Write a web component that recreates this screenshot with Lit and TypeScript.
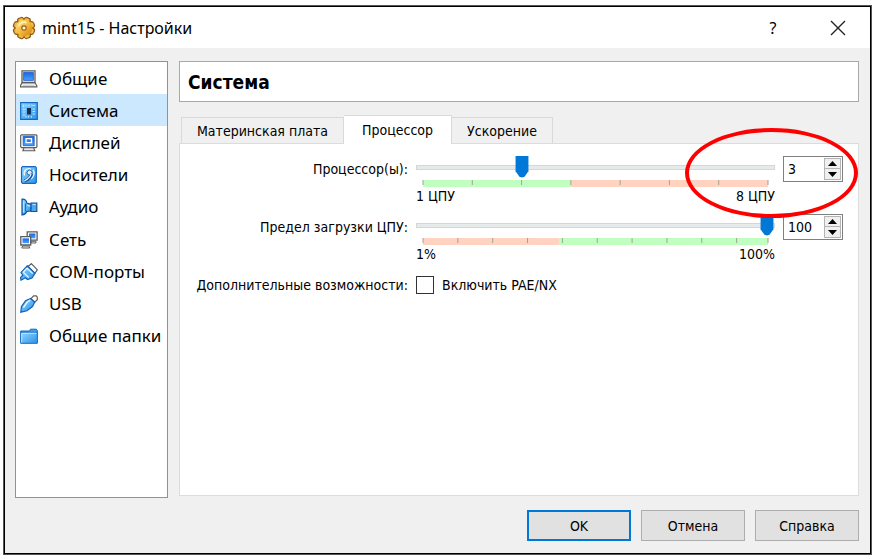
import { LitElement, html, css, svg } from "lit";
import { customElement, state, property } from "lit/decorators.js";

const icons: Record<string, unknown> = {
  general: svg`
    <path d="M2 .8h13v11.700H2z" fill="#fff" stroke="#5c5c5c" stroke-width="1.300"/>
    <path d="M3.600 2.400h9.800v8H3.600z" fill="url(#screen)" stroke="#1757c4" stroke-width=".8"/>
    <path d="M2 13h13l1.800 2.600v1.300H.400v-1.300z" fill="#fff" stroke="#5c5c5c" stroke-width="1.200"/>
    <path d="M2.500 15.200h12" stroke="#b5b5b5" stroke-width=".9"/>`,
  system: svg`
    <path d="M.7.7h16.600v16.600H.7z" fill="url(#blue)" stroke="#1468c4" stroke-width="1.200"/>
    <path d="M7 6h4v6.500H7z" fill="#12305c"/>
    <path d="M3.500 3v2M6 3v1.500M9 2.500v2M12 2.500v2M15 3.500h-2M3 7.500h2.400M3 10h2.400M3 13h2.400M12.600 7h2.400M12.600 9.500h2.400M12.600 12h2.400M6 14v1.600M8.500 14v1.600M11.500 14v1.600" stroke="#bfe4ff" stroke-width="1"/>`,
  display: svg`
    <path d="M1.500.8h14.600l.8.8v11.200l-.8.800H1.500l-.8-.8V1.600z" fill="#fff" stroke="#5c5c5c" stroke-width="1.200"/>
    <path d="M3.200 2.300h11v9.400h-11z" fill="url(#screen)" stroke="#1757c4" stroke-width=".8"/>
    <path d="M6 4.700h5.500v4H6z" fill="#2d80ee" stroke="#fff" stroke-width="1.300"/>
    <path d="M4 13.800h9.600l1.200 3H2.800z" fill="#e8e8e8" stroke="#5c5c5c" stroke-width="1.100"/>`,
  storage: svg`
    <path d="M2.500.7h12.800l1 1v14.600l-1 1H2.500l-1-1V1.700z" fill="url(#blue)" stroke="#1468c4" stroke-width="1.200"/>
    <path d="M13 3.600c2.200 3 1.200 7.400-2.600 9.400M4.600 9.500C2.800 5 7 1.400 11 3.200" fill="none" stroke="#eefaff" stroke-width="1.400"/>
    <circle cx="9.600" cy="6.600" r="2.500" fill="#d8f0ff" stroke="#1c5da6" stroke-width=".9"/>
    <path d="M11.500 8c-.5 3-3 5.500-7 7" fill="none" stroke="#174f94" stroke-width="3"/>
    <path d="M11 8c-.5 3-3 5-6.500 6.800" fill="none" stroke="#e9f7ff" stroke-width="1.300"/>`,
  audio: svg`
    <path d="M2 1.200C4.500.500 6.500 2.500 6.800 5l4.200 1.200V13l-4.200.5C6 15.500 4.500 16.800 2 17z" fill="url(#blue)" stroke="#12559f" stroke-width="1.200"/>
    <path d="M11 5h5.800v8.500H11z" fill="#4aa9f2" stroke="#12559f" stroke-width="1.200"/>
    <path d="M3.700 3.500v11M7.300 7.300l3 .8M12.600 6.500h3" stroke="#bfe8ff" stroke-width="1.200"/>
    <path d="M5.400 5.500v8" stroke="#1668be" stroke-width="1"/>`,
  network: svg`
    <path d="M7.200.8h9.900v8.400H7.200z" fill="#fff" stroke="#5c5c5c" stroke-width="1.300"/>
    <path d="M9 2.500h6.400v4.800H9z" fill="url(#screen)"/>
    <path d="M11 10.300h5v1.700h-5z" fill="#ddd" stroke="#5c5c5c" stroke-width=".9"/>
    <path d="M.8 5.700h9.900v8.300H.8z" fill="#fff" stroke="#5c5c5c" stroke-width="1.300"/>
    <path d="M2.500 7.400h6.500v4.800H2.500z" fill="url(#screen)"/>
    <path d="M2.600 15h6.400l.8 2H1.800z" fill="#eee" stroke="#5c5c5c" stroke-width="1"/>`,
  serial: svg`
    <path d="m8 3.500 3.400-2.800 6 6.200-2.600 3.500z" fill="#fff" stroke="#5c5c5c" stroke-width="1.200"/>
    <path d="M7.200 2.800 15 10.300 12 15l-4.500 1.500-2.200-1.800L1 17.200l-.5-2.700 2.300-2.200L1 9.500z" fill="url(#blue)" stroke="#1461b4" stroke-width="1.200"/>
    <path d="m7 5.300 5.700 5.300M3.500 9.500l5.200 5M3 9.500l4-4.200" fill="none" stroke="#e0f5ff" stroke-width="1.300"/>`,
  usb: svg`
    <path d="m10.700 3.800 3-3h2.500l1.100 1.300v2.700L14.500 7.400z" fill="#fff" stroke="#5c5c5c" stroke-width="1.200"/>
    <path d="M10.700 3.500 14.700 7.200 12.500 11.500 7 15.800.8 17.200 1.400 11.800 5.500 5.700z" fill="url(#blue)" stroke="#1461b4" stroke-width="1.200"/>
    <path d="m3.400 12.500 3.800-5.300 3-2" fill="none" stroke="#e6f7ff" stroke-width="1.500"/>`,
  folders: svg`
    <path d="M.7 15.800V4h8.800l1-1.800h5.800l1 1.200v12.400z" fill="#3f9fe8" stroke="#1468bc" stroke-width="1"/>
    <path d="M.7 5.300h16.600v11H.7z" fill="url(#blue)" stroke="#1873cc" stroke-width="1"/>
    <path d="M1.600 6.300h14.800M1.700 6.500v9" stroke="#bdeaff" stroke-width="1"/>`,
};

const defs = svg`<defs>
  <linearGradient id="blue" x1="0" y1="0" x2="1" y2="1">
    <stop offset="0" stop-color="#92d6ff"/><stop offset="1" stop-color="#2a92ea"/>
  </linearGradient>
  <linearGradient id="screen" x1="0" y1="0" x2="0" y2="1">
    <stop offset="0" stop-color="#1668e8"/><stop offset="1" stop-color="#4aa0fa"/>
  </linearGradient>
</defs>`;

@customElement("scale-slider")
class ScaleSlider extends LitElement {
  @property({ type: Number }) min = 1;
  @property({ type: Number }) max = 8;
  @property({ type: Number }) step = 1;
  @property({ type: Number }) value = 1;
  @property({ type: Number }) split = 0;
  @property() unit = "";
  @property() label = "";
  @property() first = "green";

  static styles = css`
    :host { display: block; min-width: 0; }
    .range {
      appearance: none; display: block; width: 100%; height: 22px; margin: 0;
      background: transparent; outline: none;
    }
    .range::-webkit-slider-runnable-track {
      height: 5px; box-sizing: border-box; background: #e7eaea; border: 1px solid #d6d6d6;
    }
    .range::-webkit-slider-thumb {
      appearance: none; width: 14px; height: 22px; margin-top: -10px; background: #0078d7;
      clip-path: polygon(4% 0, 96% 0, 96% 72%, 68% 97%, 50% 100%, 32% 97%, 4% 72%);
    }
    .scale { display: block; width: calc(100% - 14px); height: 7px; margin: 2px 7px 0; }
    .green { fill: #c0ffc0; }
    .red { fill: #ffd3c0; }
    .tick { stroke: #a3a294; stroke-width: 1px; }
    .ends { display: flex; justify-content: space-between; line-height: 18px; }
  `;

  private pos(v: number) {
    return ((v - this.min) / (this.max - this.min)) * 100;
  }

  render() {
    const ticks: number[] = [];
    for (let v = this.min; v < this.max; v += this.step) ticks.push(v);
    ticks.push(this.max);
    const at = this.pos(this.split);
    const second = this.first === "green" ? "red" : "green";
    return html`
      <input class="range" type="range" aria-label=${this.label} min=${this.min} max=${this.max}
        .value=${String(this.value)} @input=${this.onInput} />
      <svg class="scale" overflow="visible" aria-hidden="true">
        <rect class=${this.first} width="${at}%" height="7"></rect>
        <rect class=${second} x="${at}%" width="${100 - at}%" height="7"></rect>
        ${ticks.map((v) => svg`<line class="tick" x1="${this.pos(v)}%" x2="${this.pos(v)}%" y1="0" y2="5"></line>`)}
      </svg>
      <div class="ends"><span>${this.min}${this.unit}</span><span>${this.max}${this.unit}</span></div>
    `;
  }

  private onInput(e: Event) {
    const value = Number((e.target as HTMLInputElement).value);
    this.dispatchEvent(new CustomEvent("change", { detail: value }));
  }
}

@customElement("app-root")
class AppRoot extends LitElement {
  @state() page = "system";
  @state() cpus = 3;
  @state() cap = 100;

  static styles = css`
    :host {
      display: flex; box-sizing: border-box; min-height: 100vh; padding: 5px 5px 4px 3px;
      background: #fff; color: #000;
      font: 14px/18px "DejaVu Sans Condensed", "DejaVu Sans", sans-serif;
      font-stretch: condensed;
    }
    * { box-sizing: border-box; }
    button, input { font: inherit; color: inherit; }
    .window {
      flex: 1; min-width: 0; display: flex; flex-direction: column;
      border: 1px solid #555; outline: 1px solid #000; outline-offset: -2px;
      padding: 1px; background: #f0f0f0;
    }
    .titlebar {
      display: flex; align-items: center; height: 41px; padding: 0 16px 0 7px; background: #fff;
      font: 16px/24px "Noto Sans", sans-serif;
    }
    .gear { width: 24px; height: 24px; margin-right: 6px; }
    .title { flex: 1; margin: 0; font: inherit; }
    .caption {
      display: grid; place-items: center; width: 32px; height: 32px; padding: 0;
      border: 0; background: none;
    }
    .caption + .caption { margin-left: 33px; }
    .cross { width: 16px; height: 16px; }
    .body { flex: 1; display: flex; gap: 11px; padding: 13px 11px 0 10px; }
    .nav {
      flex: none; width: 153px; padding: 0; background: #fff;
      border: 1px solid #8d929c;
    }
    .list {
      display: grid; grid-auto-rows: 1fr; height: 290px; margin: 0; padding: 0; list-style: none;
      font: 17px/24px "Noto Sans", sans-serif;
    }
    .item {
      display: flex; align-items: center; gap: 11px; width: 100%; height: 100%;
      padding: 1px 0 0 4px; border: 0; background: none; white-space: nowrap; text-align: left;
    }
    .item.selected { background: #cce8ff; }
    .icon { flex: none; width: 18px; height: 18px; }
    .main { flex: 1; min-width: 0; display: flex; flex-direction: column; padding-bottom: 2px; }
    .heading {
      margin: 0; height: 41px; padding: 0 8px; border: 1px solid #a8a8a8; background: #fff;
      font-size: 19px; line-height: 41px; font-weight: bold;
    }
    .tabs { display: flex; align-items: flex-end; padding-left: 2px; margin-top: 13px; }
    .tab {
      height: 26px; padding: 0 15px; border: 1px solid #d9d9d9; border-bottom: 0;
      background: #f0f0f0; white-space: nowrap;
    }
    .tab + .tab { border-left: 0; }
    .tab.active {
      height: 29px; margin-bottom: -1px; padding: 0 18px; background: #fff; z-index: 1;
    }
    .panel {
      flex: 1; padding: 12px 15px 12px 14px; background: #fff; border: 1px solid #dcdcdc;
    }
    .form {
      display: grid; grid-template-columns: 214px minmax(0, 1fr) 60px;
      column-gap: 8px; row-gap: 9px;
    }
    .name { padding-top: 4px; text-align: right; white-space: nowrap; }
    .spin {
      position: relative; display: flex; height: 26px; padding: 1px;
      border: 1px solid #7f7f7f; background: #fff;
    }
    .number {
      flex: 1; min-width: 0; padding: 0 0 0 3px; border: 0; outline: 0; background: none;
      appearance: textfield;
    }
    .number::-webkit-inner-spin-button { appearance: none; margin: 0; }
    .steps { display: grid; grid-template-rows: 1fr 1fr; width: 17px; }
    .step {
      display: grid; place-items: center; padding: 0; border: 1px solid #b4b4b4; background: #f0f0f0;
    }
    .step + .step { border-top: 0; }
    .arrow { display: block; width: 9px; height: 5px; }
    .mark {
      position: absolute; left: -99px; top: -29px; width: 173px; height: 90px;
      border: 4px solid #f00; border-radius: 50%; pointer-events: none; z-index: 2;
    }
    .check { display: flex; align-items: center; gap: 8px; grid-column: 2 / 4; height: 26px; }
    .box {
      appearance: none; width: 18px; height: 18px; margin: 0; border: 1px solid #333; background: #fff;
    }
    .box:checked { background: #0078d7; box-shadow: inset 0 0 0 3px #fff; }
    .footer { display: flex; justify-content: flex-end; gap: 10px; padding: 12px 11px 12px; }
    .push { width: 104px; height: 31px; padding: 0; border: 1px solid #adadad; background: #e1e1e1; }
    .push.default { border: 2px solid #0078d7; }
  `;

  private spin(id: string, value: number, max: number, set: (v: number) => void, marked = false) {
    const clamp = (v: number) => set(Math.max(1, Math.min(max, v)));
    return html`<div class="spin">
      <input class="number" id=${id} type="number" min="1" max=${max} .value=${String(value)}
        @change=${(e: Event) => clamp(Number((e.target as HTMLInputElement).value))} />
      <div class="steps">
        <button class="step" aria-label="Больше" @click=${() => clamp(value + 1)}>
          <svg class="arrow" viewBox="0 0 9 5"><path d="M0 5 4.500 0 9 5z"/></svg>
        </button>
        <button class="step" aria-label="Меньше" @click=${() => clamp(value - 1)}>
          <svg class="arrow" viewBox="0 0 9 5"><path d="M0 0h9L4.500 5z"/></svg>
        </button>
      </div>
      ${marked ? html`<div class="mark"></div>` : ""}
    </div>`;
  }

  render() {
    const nav = [
      ["general", "Общие"], ["system", "Система"], ["display", "Дисплей"],
      ["storage", "Носители"], ["audio", "Аудио"], ["network", "Сеть"],
      ["serial", "COM-порты"], ["usb", "USB"], ["folders", "Общие папки"],
    ];
    const teeth = [0, 45, 90, 135, 180, 225, 270, 315];
    return html`
      <div class="window">
        <header class="titlebar">
          <svg class="gear" viewBox="0 0 24 24" aria-hidden="true">
            <defs><linearGradient id="gold" x1="0" y1="0" x2="1" y2="1">
              <stop offset="0" stop-color="#ffe48a"/><stop offset=".5" stop-color="#f6bb3c"/><stop offset="1" stop-color="#cf7f0c"/>
            </linearGradient></defs>
            <g fill="#8d5a18">${teeth.map((a) => svg`<rect x="8.300" y=".6" width="7.400" height="8" rx="2.800" transform="rotate(${a + 22} 12 12)"/>`)}
            <circle cx="12" cy="12" r="9.200"/></g>
            <g fill="url(#gold)">${teeth.map((a) => svg`<rect x="9.400" y="1.700" width="5.200" height="7" rx="2" fill="#f3b840" transform="rotate(${a + 22} 12 12)"/>`)}
            <circle cx="12" cy="12" r="8.300"/></g>
            <path d="M6.500 10.500a5.800 5.800 0 0 1 8-3.800" fill="none" stroke="#fff0b8" stroke-width="1.600"/>
            <circle cx="12" cy="12" r="2.200" fill="#fff6dc" stroke="#96601a" stroke-width="1.200"/>
          </svg>
          <h1 class="title">mint15 - Настройки</h1>
          <button class="caption" aria-label="Справка по окну">?</button>
          <button class="caption" aria-label="Закрыть">
            <svg class="cross" viewBox="0 0 16 16"><path d="m1 1 14 14M15 1 1 15" stroke="#222" stroke-width="1.400"/></svg>
          </button>
        </header>
        <div class="body">
          <nav class="nav">
            <ul class="list">
              ${nav.map(([id, text]) => html`<li>
                <button class="item ${this.page === id ? "selected" : ""}" @click=${() => (this.page = id)}>
                  <svg class="icon" viewBox="0 0 18 18" aria-hidden="true">${defs}${icons[id]}</svg>${text}
                </button>
              </li>`)}
            </ul>
          </nav>
          <main class="main">
            <h2 class="heading">Система</h2>
            <div class="tabs" role="tablist">
              <button class="tab" role="tab">Материнская плата</button>
              <button class="tab active" role="tab" aria-selected="true">Процессор</button>
              <button class="tab" role="tab">Ускорение</button>
            </div>
            <section class="panel">
              <div class="form">
                <label class="name" for="cpus">Процессор(ы):</label>
                <scale-slider label="Процессоры" .min=${1} .max=${8} .split=${4} .value=${this.cpus} unit=" ЦПУ"
                  @change=${(e: CustomEvent) => (this.cpus = e.detail)}></scale-slider>
                ${this.spin("cpus", this.cpus, 8, (v) => (this.cpus = v), true)}
                <label class="name" for="cap">Предел загрузки ЦПУ:</label>
                <scale-slider label="Предел загрузки" .min=${1} .max=${100} .step=${10} .split=${40} .value=${this.cap}
                  first="red" unit="%" @change=${(e: CustomEvent) => (this.cap = e.detail)}></scale-slider>
                ${this.spin("cap", this.cap, 100, (v) => (this.cap = v))}
                <span class="name">Дополнительные возможности:</span>
                <label class="check"><input class="box" type="checkbox" />Включить PAE/NX</label>
              </div>
            </section>
          </main>
        </div>
        <footer class="footer">
          <button class="push default">OK</button>
          <button class="push">Отмена</button>
          <button class="push">Справка</button>
        </footer>
      </div>
    `;
  }
}
